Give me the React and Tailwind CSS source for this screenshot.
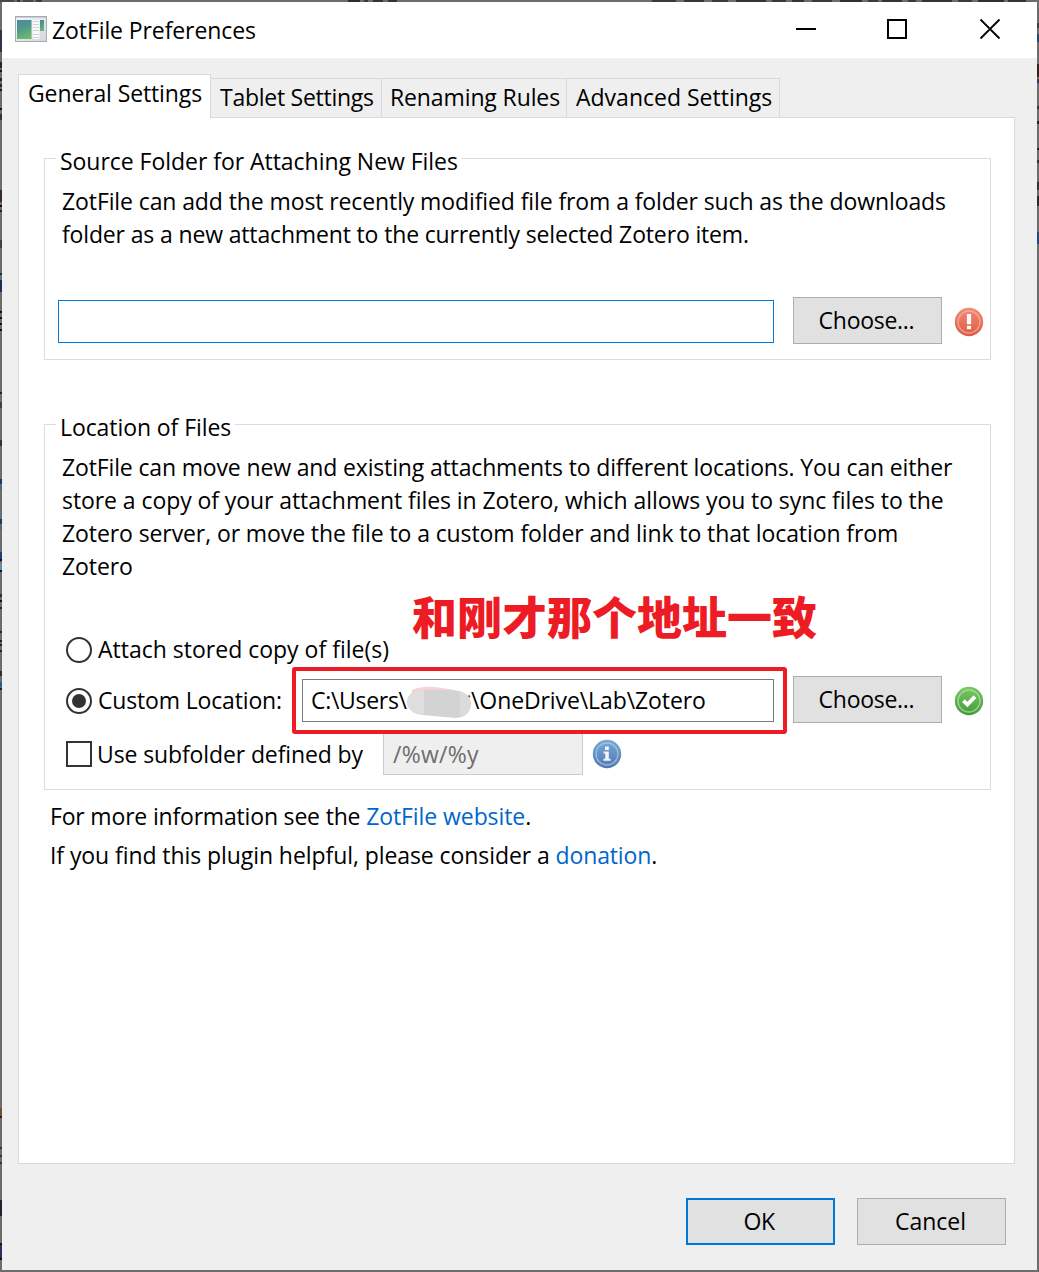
import React from "react";

const leftMarks = [
  [30, 8, "#33343a"], [38, 14, "#2b3550"], [62, 6, "#23242c"], [70, 2, "#15161c"], [78, 3, "#23242c"], [84, 3, "#23242c"],
  [89, 2, "#15161c"], [108, 2, "#15161c"], [114, 6, "#33343a"],
  [190, 12, "#3a2a30"], [205, 2, "#111"], [210, 2, "#222"], [240, 8, "#4d3c34"], [273, 2, "#1b2b50"], [280, 12, "#1c2c55"],
  [311, 2, "#111"], [317, 2, "#111"], [323, 2, "#111"], [329, 2, "#111"], [392, 2, "#222"], [402, 6, "#44403c"],
  [440, 6, "#3e2d20"], [479, 5, "#1d3765"], [487, 2, "#3f6486"], [519, 5, "#1d3765"], [527, 2, "#3f6486"],
  [552, 7, "#263b79"], [559, 2, "#111"], [563, 7, "#5a93a8"],
  [570, 2, "#111"], [594, 3, "#3d2d20"], [600, 2, "#111"], [607, 2, "#222"], [631, 2, "#222"], [640, 2, "#222"],
  [644, 2, "#222"], [650, 2, "#222"], [671, 5, "#3d2d20"], [682, 5, "#2c5b96"], [688, 2, "#222"], [1108, 8, "#6b5538"],
  [1116, 2, "#2c2118"], [1147, 2, "#3e2d20"], [1155, 2, "#3e2d20"], [1162, 2, "#3e2d20"], [1200, 16, "#20242f"],
  [1243, 2, "#111"], [1245, 13, "#2c2f5c"], [1258, 2, "#111"],
];

const rightMarks = [
  [23, 5, "#3d3a38"], [34, 8, "#28456a"], [64, 13, "#33231b"], [79, 4, "#2a3c5a"], [106, 3, "#4d3420"],
  [121, 3, "#222"], [148, 2, "#222"], [160, 3, "#333"], [182, 8, "#333"], [196, 10, "#2c2c30"], [232, 12, "#2b4672"],
];

const topMarks = [
  [0, 14, "#48464a"], [17, 3, "#39363a"], [23, 10, "#4a4648"], [36, 6, "#3f3c40"], [348, 12, "#2e2e32"],
  [364, 4, "#3b3b3e"], [373, 10, "#333338"], [388, 9, "#333338"], [652, 24, "#3d3a3a"], [684, 20, "#3a3636"],
  [712, 16, "#3d3a3a"], [736, 30, "#35333a"], [772, 14, "#3c3837"], [792, 12, "#353235"], [812, 20, "#3d3a3a"],
  [840, 22, "#302e33"], [868, 10, "#3d3a3a"], [882, 20, "#353235"], [908, 8, "#3d3a3a"], [922, 30, "#353235"],
  [958, 14, "#3d3a3a"], [978, 26, "#302e33"], [1008, 18, "#353235"],
];

function Badge({ kind, className = "" }) {
  const colors = {
    error: ["#f28c76", "#dc5a45", "#f9b3a4"],
    ok: ["#7cc765", "#429b3d", "#b4e2a5"],
    info: ["#79aad8", "#4f78b2", "#b0cbe6"],
  }[kind];
  return (
    <svg className={`block shrink-0 ${className}`} width="30" height="30" viewBox="0 0 30 30">
      <defs>
        <linearGradient id={`g-${kind}`} x1="0" y1="0" x2="0" y2="1">
          <stop offset="0" stopColor={colors[0]} />
          <stop offset="1" stopColor={colors[1]} />
        </linearGradient>
      </defs>
      <circle cx="15" cy="15" r="14.2" fill={`url(#g-${kind})`} />
      <circle cx="15" cy="15" r="11" fill="none" stroke={colors[2]} strokeWidth="1.4" opacity="0.7" />
      {kind === "error" && (
        <g fill="#fff">
          <path d="M12.9 7h4.200v10.200h-4.200z" />
          <path d="M12.900 18.800h4.200v3.400h-4.200z" />
        </g>
      )}
      {kind === "ok" && <path d="M9.4 14.600l4 4 7.600-8" fill="none" stroke="#fff" strokeWidth="3.800" />}
      {kind === "info" && (
        <g fill="#fff" opacity="0.92">
          <path d="M13 7.600h3.800v3.400h-3.800z" />
          <path d="M11.600 12.400h5.200v7.400h1.800v2h-7.200v-2h1.900v-5.400h-1.700z" />
        </g>
      )}
    </svg>
  );
}

function AppIcon() {
  return (
    <svg className="block shrink-0" width="32" height="26" viewBox="0 0 32 26">
      <defs>
        <linearGradient id="pane" x1="0" y1="0" x2="0.3" y2="1">
          <stop offset="0" stopColor="#4b85ad" />
          <stop offset="0.5" stopColor="#4f9a8b" />
          <stop offset="1" stopColor="#6cb56f" />
        </linearGradient>
        <linearGradient id="frame" x1="0" y1="0" x2="1" y2="1">
          <stop offset="0" stopColor="#f6f7f8" />
          <stop offset="1" stopColor="#d3d6da" />
        </linearGradient>
      </defs>
      <rect x="0.5" y="0.5" width="31" height="25" fill="url(#frame)" stroke="#a5abb3" />
      <path d="M1 1.500h30" stroke="#c9ced6" />
      <rect x="2" y="4" width="14.500" height="19" fill="url(#pane)" />
      <rect x="17.500" y="4" width="7" height="19" fill="#fafafa" />
      <path d="M18 5.500h6M18 8.500h6M18 11.500h6M18 14.500h6M18 18.500h6M18 21.500h6" stroke="#d0d3d6" />
      <rect x="25" y="4" width="4" height="11" fill="url(#pane)" />
    </svg>
  );
}

function Button({ children, primary, className = "" }) {
  return (
    <button
      className={`flex h-[47px] w-[149px] shrink-0 items-center justify-center bg-[#e1e1e1] ${
        primary ? "border-2 border-[#0078d7]" : "border border-[#adadad]"
      } ${className}`}
    >
      {children}
    </button>
  );
}

function Group({ title, className = "", children }) {
  return (
    <section className={`relative ml-[25px] w-[947px] border border-[#dcdcdc] ${className}`}>
      <h2 className="absolute -top-[14px] left-[11px] bg-white pr-1 pl-[4px] leading-[33px] whitespace-nowrap">{title}</h2>
      {children}
    </section>
  );
}

export default function App() {
  return (
    <div className="relative h-[1272px] w-[1039px] overflow-hidden bg-[#6c6c6c] p-[2px] font-['Open_Sans','Noto_Sans',sans-serif] text-[23px] leading-[33px] text-black">
      {topMarks.map(([x, w, c]) => (
        <i key={x} className="absolute top-0 h-[2px]" style={{ left: x, width: w, background: c }} />
      ))}
      {leftMarks.map(([y, h, c]) => (
        <i key={y} className="absolute left-0 w-[2px]" style={{ top: y, height: h, background: c }} />
      ))}
      {rightMarks.map(([y, h, c]) => (
        <i key={y} className="absolute right-0 w-[2px]" style={{ top: y, height: h, background: c }} />
      ))}

      <div className="flex h-[1268px] flex-col bg-[#efefef]">
        <header className="flex h-14 shrink-0 bg-white">
          <div className="pt-[14px] pl-[13px]">
            <AppIcon />
          </div>
          <h1 className="mt-[12px] ml-[5px] flex-1 tracking-[-0.096px]">ZotFile Preferences</h1>
          <svg className="block" width="241" height="56" viewBox="796 2 241 56" fill="none" stroke="#000">
            <path d="M796 29h20" strokeWidth="2" />
            <path d="M888 20h18v18h-18z" strokeWidth="2" />
            <path d="M980.500 19.500l19 19M999.500 19.500l-19 19" strokeWidth="1.800" />
          </svg>
        </header>

        <nav className="relative z-10 mt-4 -mb-px ml-4 flex h-[44px] shrink-0 items-end whitespace-nowrap">
          <div className="h-[44px] w-[193px] border border-b-0 border-[#d9d9d9] bg-white pt-[2px] pl-[9px] tracking-[-0.12px]">General Settings</div>
          <div className="h-[40px] w-[171px] border-y border-r border-[#d9d9d9] pt-[2px] pl-[9px] tracking-[-0.267px]">Tablet Settings</div>
          <div className="h-[40px] w-[185px] border-y border-r border-[#d9d9d9] pt-[2px] pl-[8px] tracking-[-0.12px]">Renaming Rules</div>
          <div className="h-[40px] w-[213px] border-y border-r border-[#d9d9d9] pt-[2px] pl-[9px]">Advanced Settings</div>
        </nav>

        <main className="ml-4 flex h-[1047px] w-[997px] shrink-0 flex-col border border-[#d9d9d9] bg-white">
          <Group title={<span className="tracking-[-0.037px]">Source Folder for Attaching New Files</span>} className="mt-10 h-[202px]">
            <div className="pt-[26px] pl-[17px] whitespace-nowrap">
              <p className="tracking-[-0.104px]">ZotFile can add the most recently modified file from a folder such as the downloads</p>
              <p className="tracking-[-0.149px]">folder as a new attachment to the currently selected Zotero item.</p>
            </div>
            <div className="mt-[46px] ml-[13px] flex items-center">
              <div className="mt-[2px] h-[43px] w-[716px] border border-[#0078d7] bg-white" />
              <Button className="ml-[19px] pr-[2px] tracking-[-0.278px]">Choose...</Button>
              <Badge kind="error" className="mt-[3px] ml-[12px]" />
            </div>
          </Group>

          <Group title={<span className="tracking-[-0.08px]">Location of Files</span>} className="mt-16 h-[366px]">
            <div className="pt-[26px] pl-[17px] whitespace-nowrap">
              <p className="tracking-[-0.149px]">ZotFile can move new and existing attachments to different locations. You can either</p>
              <p className="tracking-[-0.075px]">store a copy of your attachment files in Zotero, which allows you to sync files to the</p>
              <p className="tracking-[-0.096px]">Zotero server, or move the file to a custom folder and link to that location from</p>
              <p className="tracking-[-0.102px]">Zotero</p>
            </div>
            <div className="relative mt-[50px] ml-[21px] flex h-[33px] items-center">
              <span className="size-[26px] rounded-full border-2 border-[#333]" />
              <span className="ml-[6px]">Attach stored copy of file(s)</span>
              <strong className="absolute -top-[47px] left-[346px] font-['Noto_Sans_CJK_SC',sans-serif] text-[45px] leading-[60px] font-black whitespace-nowrap text-[#ed1c24]">
                和刚才那个地址一致
              </strong>
            </div>
            <div className="relative mt-[10px] ml-[21px] flex h-[47px] items-center whitespace-nowrap">
              <span className="mt-[3px] flex size-[26px] items-center justify-center rounded-full border-2 border-[#333]">
                <span className="size-[14px] rounded-full bg-[#333]" />
              </span>
              <span className="mt-[2px] ml-[6px] w-[204px] tracking-[-0.163px]">Custom Location:</span>
              <div className="relative mt-[2px] flex h-[43px] w-[472px] items-center border border-[#7a7a7a] bg-white pl-[8px]">
                <span className="w-[160px] tracking-[-0.3px]">C:\Users\</span>
                <span className="tracking-[-0.099px]">\OneDrive\Lab\Zotero</span>
                <svg className="absolute top-[6px] left-[102px]" width="68" height="34" viewBox="405 686 68 34">
                  <path d="M468 697l2-1" stroke="#555" strokeWidth="2" />
                  <path d="M412 690Q422 686 435 687L455 690L440 694H412z" fill="#f7d3d5" />
                  <path d="M407 702Q408 690 424 690L454 690Q470 692 471 704Q470 717 456 718L422 715Q408 713 407 702z" fill="#d3d3d3" />
                  <path d="M407 702Q408 690 424 690V715Q408 713 407 702z" fill="#dedede" />
                  <path d="M460 691Q470 694 471 704Q470 715 460 717z" fill="#dbdbdb" />
                </svg>
              </div>
              <Button className="ml-[19px] pr-[2px] tracking-[-0.278px]">Choose...</Button>
              <Badge kind="ok" className="mt-[3px] ml-[12px]" />
              <span className="absolute -top-[9px] left-[226px] z-10 h-[67px] w-[495px] rounded-[3px] border-4 border-[#ed1c24]" />
            </div>
            <div className="mt-[9px] ml-[21px] flex h-[43px] items-center">
              <span className="size-[26px] border-2 border-[#333]" />
              <span className="mt-[2px] ml-[5px] w-[286px] tracking-[-0.115px]">Use subfolder defined by</span>
              <div className="h-[43px] w-[200px] border border-[#ccc] bg-[#efefef] pt-[5px] pl-[9px] tracking-[0.257px] text-[#6d6d6d]">/%w/%y</div>
              <Badge kind="info" className="ml-[9px]" />
            </div>
          </Group>

          <div className="mt-[10px] ml-[31px] whitespace-nowrap">
            <p>
              <span className="tracking-[-0.18px]">For more information see the </span>
              <a className="tracking-[-0.08px] text-[#0066cc]">ZotFile website</a>.
            </p>
            <p className="mt-[6px]">
              <span className="tracking-[-0.075px]">If you find this plugin helpful, please consider a </span>
              <a className="tracking-[-0.15px] text-[#0066cc]">donation</a>.
            </p>
          </div>
        </main>

        <footer className="mt-[34px] mr-[31px] flex justify-end gap-[22px]">
          <Button primary className="pr-[3px] tracking-[-0.5px]">OK</Button>
          <Button className="pr-[2px]">Cancel</Button>
        </footer>
      </div>
    </div>
  );
}
